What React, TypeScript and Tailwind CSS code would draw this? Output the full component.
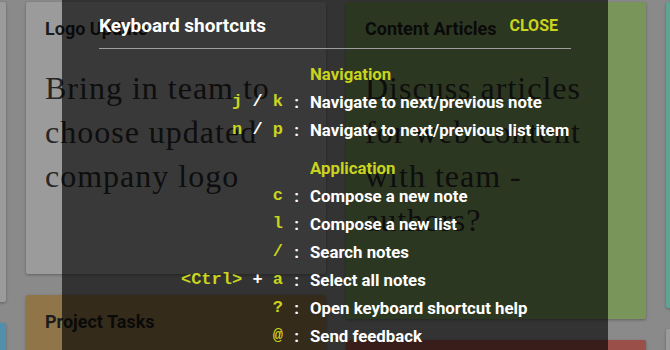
import React from "react";

type Note = { title: string; body?: string; color: string; h: number };

const columns: Note[][] = [
  [
    { title: "", color: "bg-[#9b9b9b]", h: 300 },
    { title: "", color: "bg-[#5190ad]", h: 200 },
  ],
  [
    { title: "Logo Update", body: "Bring in team to choose updated company logo", color: "bg-[#9b9b9b]", h: 272 },
    { title: "Project Tasks", color: "bg-[#8f7548]", h: 200 },
  ],
  [
    { title: "Content Articles", body: "Discuss articles for web content with team - authors?", color: "bg-[#79955a]", h: 317 },
    { title: "", color: "bg-[#9a4f48]", h: 200 },
  ],
  [
    { title: "", color: "bg-[#5fa393]", h: 306 },
    { title: "", color: "bg-[#9b9b9b]", h: 200 },
  ],
];

type Row = { keys: { t: string; k: boolean }[]; label: string };

const sections: { name: string; rows: Row[] }[] = [
  {
    name: "Navigation",
    rows: [
      { keys: [{ t: "j", k: true }, { t: " / ", k: false }, { t: "k", k: true }], label: "Navigate to next/previous note" },
      { keys: [{ t: "n", k: true }, { t: " / ", k: false }, { t: "p", k: true }], label: "Navigate to next/previous list item" },
    ],
  },
  {
    name: "Application",
    rows: [
      { keys: [{ t: "c", k: true }], label: "Compose a new note" },
      { keys: [{ t: "l", k: true }], label: "Compose a new list" },
      { keys: [{ t: "/", k: true }], label: "Search notes" },
      { keys: [{ t: "<Ctrl>", k: true }, { t: " + ", k: false }, { t: "a", k: true }], label: "Select all notes" },
      { keys: [{ t: "?", k: true }], label: "Open keyboard shortcut help" },
      { keys: [{ t: "@", k: true }], label: "Send feedback" },
    ],
  },
];

function NoteCard({ note }: { note: Note }) {
  return (
    <div
      className={`${note.color} rounded-[2px] shadow-[0_1px_3px_rgba(0,0,0,0.3)] px-[19px] pt-[15px] shrink-0`}
      style={{ height: note.h }}
    >
      {note.title && (
        <div className="text-[18px] leading-[24px] font-bold text-[#1c1c1c]">{note.title}</div>
      )}
      {note.body && (
        <div className="pt-[25px] pr-[24px] text-[32px] leading-[44px] tracking-[1px] font-['Liberation_Serif',serif] text-[#262626]">
          {note.body}
        </div>
      )}
    </div>
  );
}

export default function App() {
  return (
    <div className="relative w-[670px] h-[350px] overflow-hidden bg-[#8a8a8a] font-['Roboto',sans-serif]">
      {/* Notes board */}
      <div className="flex justify-center gap-5 pt-[2px] pl-[2px]">
        {columns.map((col, i) => (
          <div key={i} className="w-[300px] shrink-0 flex flex-col gap-[21px]">
            {col.map((n, j) => (
              <NoteCard key={j} note={n} />
            ))}
          </div>
        ))}
      </div>

      {/* Shortcuts panel */}
      <div className="absolute inset-y-0 left-[62px] w-[546px] bg-black/[0.63] px-[37px]">
        <div className="flex items-center justify-between pt-[14px] pb-[10px] border-b border-[#9e9e9e]">
          <span className="text-[19px] leading-[24px] font-bold text-white">Keyboard shortcuts</span>
          <button className="pr-[13px] text-[16px] leading-[24px] font-bold text-[#c8d41e] uppercase">Close</button>
        </div>

        <div className="mt-[11px]">
          {sections.map((s, si) => (
            <div key={s.name} className={si > 0 ? "mt-[10px]" : ""}>
              <div className="grid grid-cols-[184px_27px_1fr] leading-[28px]">
                <span />
                <span />
                <span className="text-[16.8px] font-bold text-[#c8d41e]">{s.name}</span>
              </div>
              {s.rows.map((r) => (
                <div key={r.label} className="grid grid-cols-[184px_27px_1fr] leading-[28px] items-center">
                  <span className="text-right whitespace-pre font-['Liberation_Mono',monospace] text-[17px] font-bold">
                    {r.keys.map((k, ki) => (
                      <span key={ki} className={k.k ? "text-[#c8d41e]" : "text-white"}>
                        {k.t}
                      </span>
                    ))}
                  </span>
                  <span className="text-center text-[16.8px] font-bold text-white">:</span>
                  <span className="whitespace-nowrap text-[16.8px] font-bold text-white">{r.label}</span>
                </div>
              ))}
            </div>
          ))}
        </div>
      </div>
    </div>
  );
}
